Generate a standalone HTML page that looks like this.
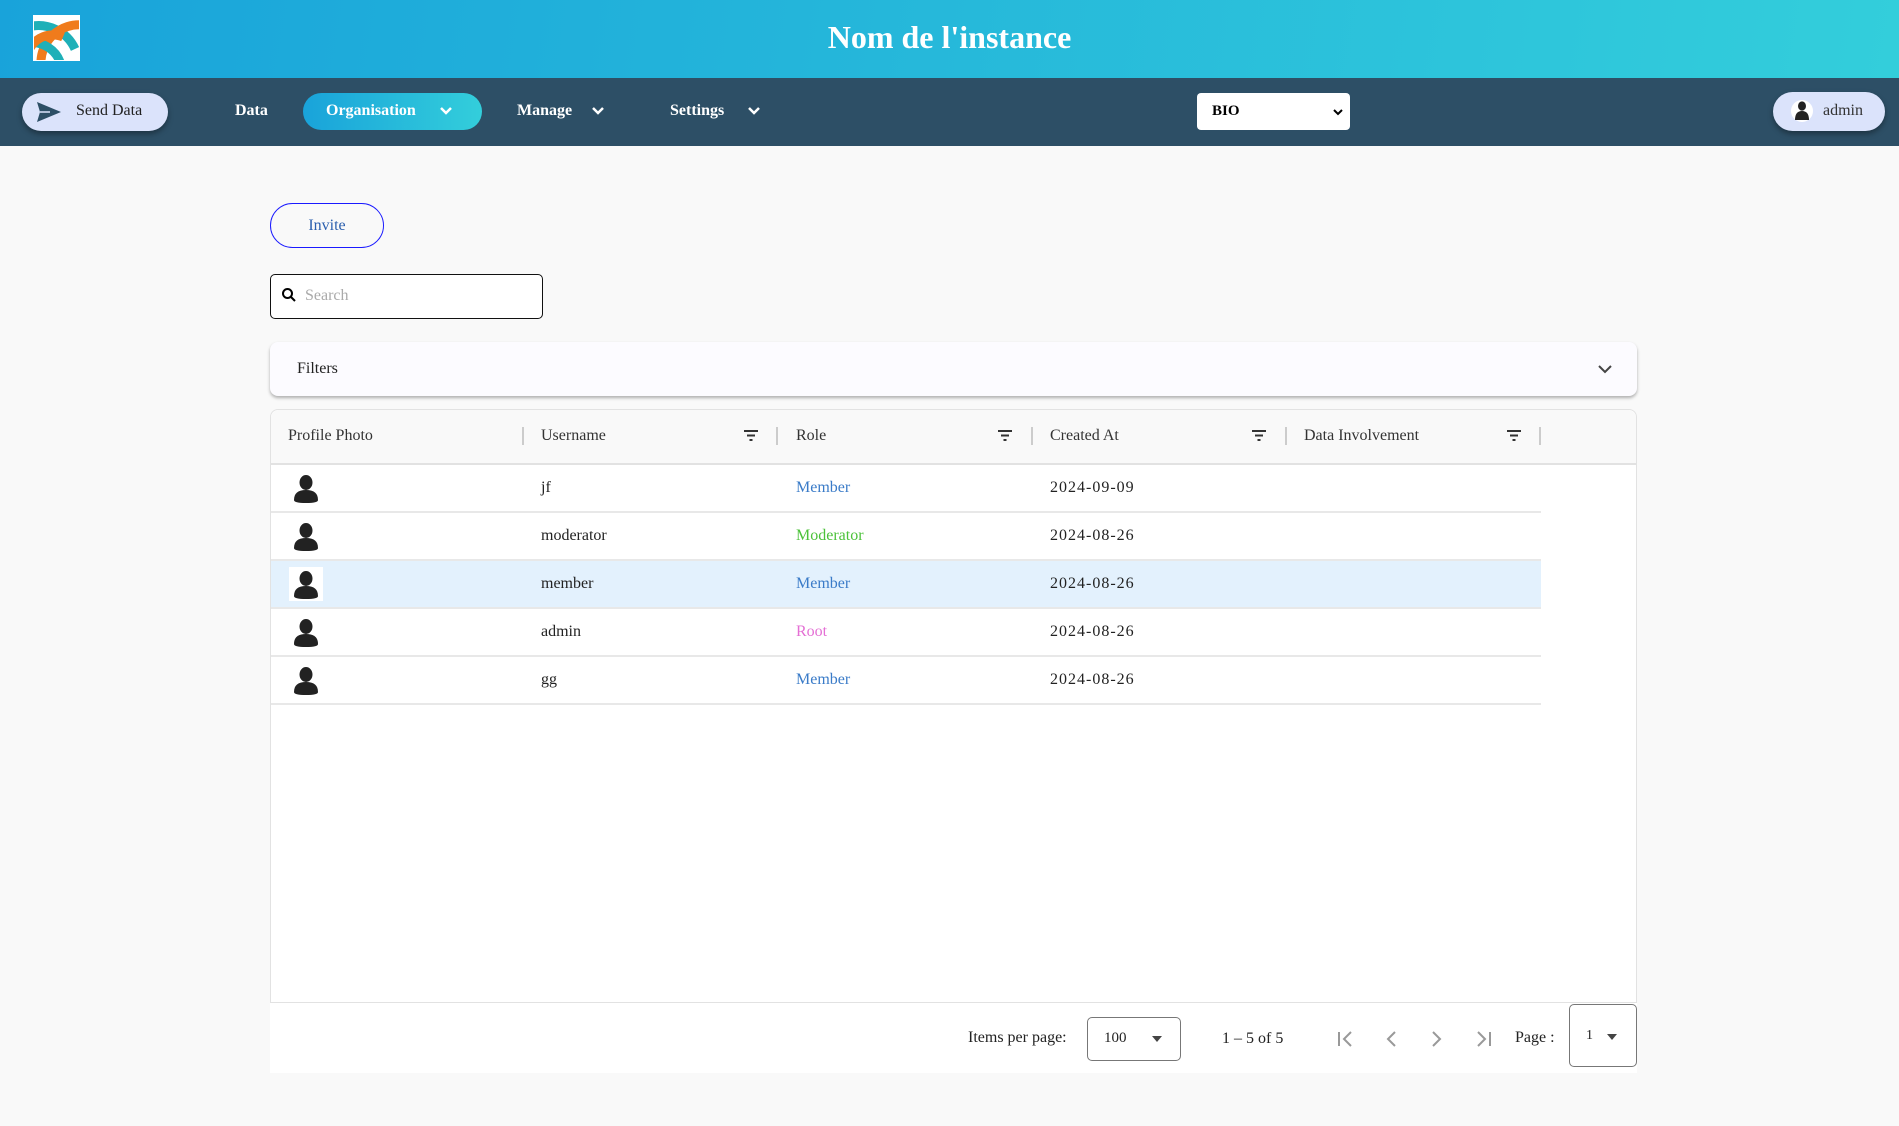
<!DOCTYPE html>
<html><head><meta charset="utf-8"><style>
*{box-sizing:border-box;margin:0;padding:0}
body{width:1899px;height:1126px;overflow:hidden;background:#f9f9f9;font-family:"Liberation Serif","DejaVu Serif",serif;color:#222;position:relative;font-size:16px}
.abs{position:absolute}
.hdr{left:0;top:0;width:1899px;height:78px;background:linear-gradient(100deg,#19a3da,#33cedb)}
.title{left:0;width:1899px;top:19px;text-align:center;color:#fff;font-size:32px;font-weight:bold}
.nav{left:0;top:78px;width:1899px;height:68px;background:#2d4f66}
.navt{color:#fff;font-weight:bold;font-size:16px;top:102px}
.pill{border-radius:20px;box-shadow:0 3px 6px rgba(0,0,0,.35)}
.th{top:427px;font-size:16px;color:#333}
.sep{top:427px;width:2px;height:18px;background:#ccc}
.row{left:271px;width:1270px;height:48px;border-bottom:2px solid #e8e8e8}
.cell{font-size:16px}
</style></head><body>
<div class="abs hdr"></div>
<svg class="abs" style="left:33px;top:15px" width="47" height="46" viewBox="0 0 47 46">
<rect width="47" height="46" fill="#fff"/>
<clipPath id="c"><rect x="1" y="1" width="45" height="44"/></clipPath>
<g clip-path="url(#c)" fill="none" stroke-width="9">
<path d="M-5 18 A40 40 0 0 1 42 40" stroke="#1fb0b8" transform="translate(0,-6)"/>
<path d="M8 50 A38 38 0 0 1 50 10" stroke="#f07b1c"/>
<path d="M-6 28 A30 30 0 0 1 28 50" stroke="#1fb0b8"/>
<path d="M-4 50 A26 26 0 0 1 32 22" stroke="#f07b1c" transform="translate(-2,0)"/>
</g></svg>
<div class="abs title">Nom de l'instance</div>
<div class="abs nav"></div>
<div class="abs pill" style="left:22px;top:93px;width:146px;height:38px;background:#dbe3fb"></div>
<svg class="abs" style="left:36px;top:101px" width="26" height="22" viewBox="0 0 26 22"><path d="M1 1 L25 11 L1 21 L4 11 Z" fill="#2d4f66"/><path d="M4 11 H14" stroke="#dbe3fb" stroke-width="1.5"/></svg>
<div class="abs" style="left:76px;top:102px;font-size:16px;color:#222">Send Data</div>
<div class="abs navt" style="left:235px">Data</div>
<div class="abs" style="left:303px;top:93px;width:179px;height:37px;border-radius:19px;background:linear-gradient(90deg,#19a3da,#33cedb)"></div>
<div class="abs navt" style="left:326px">Organisation</div>
<svg class="abs" style="left:439px;top:106px" width="14" height="10"><path d="M2 2 L7 7 L12 2" stroke="#fff" stroke-width="2.5" fill="none"/></svg>
<div class="abs navt" style="left:517px">Manage</div>
<svg class="abs" style="left:591px;top:106px" width="14" height="10"><path d="M2 2 L7 7 L12 2" stroke="#fff" stroke-width="2.5" fill="none"/></svg>
<div class="abs navt" style="left:670px">Settings</div>
<svg class="abs" style="left:747px;top:106px" width="14" height="10"><path d="M2 2 L7 7 L12 2" stroke="#fff" stroke-width="2.5" fill="none"/></svg>
<div class="abs" style="left:1197px;top:93px;width:153px;height:37px;background:#fff;border-radius:4px"></div>
<div class="abs" style="left:1212px;top:103px;font-size:15px;font-weight:bold;color:#000">BIO</div>
<svg class="abs" style="left:1333px;top:108px" width="10" height="8"><path d="M1 2 L5 6 L9 2" stroke="#000" stroke-width="2" fill="none"/></svg>
<div class="abs pill" style="left:1773px;top:92px;width:112px;height:39px;background:#dbe3fb"></div>
<div class="abs" style="left:1791px;top:100px;width:22px;height:22px;border-radius:50%;background:#fff"></div>
<svg class="abs" style="left:1795px;top:101px" width="14" height="20" viewBox="0 0 14 20"><ellipse cx="7" cy="5" rx="4" ry="4.6" fill="#222"/><path d="M0 19 Q0 10 7 10 Q14 10 14 19 Z" fill="#222"/></svg>
<div class="abs" style="left:1823px;top:102px;font-size:16px;color:#333">admin</div>

<div class="abs" style="left:270px;top:203px;width:114px;height:45px;border:1.5px solid #1a1aff;border-radius:23px;text-align:center;line-height:44px;color:#2b5fae">Invite</div>
<div class="abs" style="left:270px;top:274px;width:273px;height:45px;border:1.5px solid #111;border-radius:5px;background:#fff"></div>
<svg class="abs" style="left:281px;top:287px" width="16" height="16"><circle cx="6.5" cy="6.5" r="4.5" stroke="#000" stroke-width="2" fill="none"/><path d="M10 10 L14 14" stroke="#000" stroke-width="2"/></svg>
<div class="abs" style="left:305px;top:287px;color:#aaa">Search</div>
<div class="abs" style="left:270px;top:342px;width:1367px;height:54px;background:#fcfbff;border-radius:8px;box-shadow:0 2px 3px rgba(0,0,0,.3)"></div>
<div class="abs" style="left:297px;top:360px">Filters</div>
<svg class="abs" style="left:1597px;top:363px" width="16" height="12"><path d="M2 3 L8 9 L14 3" stroke="#444" stroke-width="2" fill="none"/></svg>

<div class="abs" style="left:270px;top:409px;width:1367px;height:594px;background:#fff;border:1.5px solid #e2e2e2;border-radius:8px 8px 0 0"></div>
<div class="abs" style="left:271px;top:410px;width:1365px;height:55px;background:#f9f9f9;border-bottom:2px solid #e2e2e2;border-radius:8px 8px 0 0"></div>
<div class="abs th" style="left:288px">Profile Photo</div>
<div class="abs sep" style="left:522px"></div>
<div class="abs th" style="left:541px">Username</div>
<div class="abs sep" style="left:776px"></div>
<div class="abs th" style="left:796px">Role</div>
<div class="abs sep" style="left:1031px"></div>
<div class="abs th" style="left:1050px">Created At</div>
<div class="abs sep" style="left:1285px"></div>
<div class="abs th" style="left:1304px">Data Involvement</div>
<div class="abs sep" style="left:1539px"></div>
<svg class="abs" style="left:743px;top:429px" width="16" height="13"><path d="M1 2H15M4 6.5H12M6.5 11H9.5" stroke="#333" stroke-width="2"/></svg>
<svg class="abs" style="left:997px;top:429px" width="16" height="13"><path d="M1 2H15M4 6.5H12M6.5 11H9.5" stroke="#333" stroke-width="2"/></svg>
<svg class="abs" style="left:1251px;top:429px" width="16" height="13"><path d="M1 2H15M4 6.5H12M6.5 11H9.5" stroke="#333" stroke-width="2"/></svg>
<svg class="abs" style="left:1506px;top:429px" width="16" height="13"><path d="M1 2H15M4 6.5H12M6.5 11H9.5" stroke="#333" stroke-width="2"/></svg>

<div class="abs row" style="top:465px"></div>
<div class="abs row" style="top:513px"></div>
<div class="abs row" style="top:561px;background:#e3f1fd"></div>
<div class="abs row" style="top:609px"></div>
<div class="abs row" style="top:657px"></div>
<div class="abs" style="left:289px;top:567px;width:34px;height:34px;background:#fff"></div>

<svg class="abs" style="left:294px;top:475px" width="24" height="29" viewBox="0 0 24 29"><ellipse cx="12" cy="7.5" rx="6.5" ry="7.5" fill="#222"/><path d="M0 25 Q0 15 12 15 Q24 15 24 25 Q24 28 12 28 Q0 28 0 25Z" fill="#222"/></svg>
<svg class="abs" style="left:294px;top:523px" width="24" height="29" viewBox="0 0 24 29"><ellipse cx="12" cy="7.5" rx="6.5" ry="7.5" fill="#222"/><path d="M0 25 Q0 15 12 15 Q24 15 24 25 Q24 28 12 28 Q0 28 0 25Z" fill="#222"/></svg>
<svg class="abs" style="left:294px;top:571px" width="24" height="29" viewBox="0 0 24 29"><ellipse cx="12" cy="7.5" rx="6.5" ry="7.5" fill="#222"/><path d="M0 25 Q0 15 12 15 Q24 15 24 25 Q24 28 12 28 Q0 28 0 25Z" fill="#222"/></svg>
<svg class="abs" style="left:294px;top:619px" width="24" height="29" viewBox="0 0 24 29"><ellipse cx="12" cy="7.5" rx="6.5" ry="7.5" fill="#222"/><path d="M0 25 Q0 15 12 15 Q24 15 24 25 Q24 28 12 28 Q0 28 0 25Z" fill="#222"/></svg>
<svg class="abs" style="left:294px;top:667px" width="24" height="29" viewBox="0 0 24 29"><ellipse cx="12" cy="7.5" rx="6.5" ry="7.5" fill="#222"/><path d="M0 25 Q0 15 12 15 Q24 15 24 25 Q24 28 12 28 Q0 28 0 25Z" fill="#222"/></svg>

<div class="abs cell" style="left:541px;top:479px">jf</div>
<div class="abs cell" style="left:796px;top:479px;color:#3a7bc8">Member</div>
<div class="abs cell" style="left:1050px;top:479px;letter-spacing:1px">2024-09-09</div>
<div class="abs cell" style="left:541px;top:527px">moderator</div>
<div class="abs cell" style="left:796px;top:527px;color:#4cc23a">Moderator</div>
<div class="abs cell" style="left:1050px;top:527px;letter-spacing:1px">2024-08-26</div>
<div class="abs cell" style="left:541px;top:575px">member</div>
<div class="abs cell" style="left:796px;top:575px;color:#3a7bc8">Member</div>
<div class="abs cell" style="left:1050px;top:575px;letter-spacing:1px">2024-08-26</div>
<div class="abs cell" style="left:541px;top:623px">admin</div>
<div class="abs cell" style="left:796px;top:623px;color:#e46fd4">Root</div>
<div class="abs cell" style="left:1050px;top:623px;letter-spacing:1px">2024-08-26</div>
<div class="abs cell" style="left:541px;top:671px">gg</div>
<div class="abs cell" style="left:796px;top:671px;color:#3a7bc8">Member</div>
<div class="abs cell" style="left:1050px;top:671px;letter-spacing:1px">2024-08-26</div>

<div class="abs" style="left:270px;top:1003px;width:1367px;height:70px;background:#fff"></div>
<div class="abs" style="left:968px;top:1029px">Items per page:</div>
<div class="abs" style="left:1087px;top:1017px;width:94px;height:44px;border:1.5px solid #777;border-radius:5px"></div>
<div class="abs" style="left:1104px;top:1030px;font-size:15px">100</div>
<svg class="abs" style="left:1151px;top:1035px" width="12" height="8"><path d="M1 1H11L6 7Z" fill="#444"/></svg>
<div class="abs" style="left:1222px;top:1030px">1 – 5 of 5</div>
<svg class="abs" style="left:1337px;top:1029px" width="160" height="20" fill="none" stroke="#999" stroke-width="2">
<path d="M2 3V17M14 3L7 10L14 17"/><path d="M58 3L51 10L58 17"/><path d="M96 3L103 10L96 17"/><path d="M141 3L148 10L141 17M153 3V17"/></svg>
<div class="abs" style="left:1515px;top:1029px">Page :</div>
<div class="abs" style="left:1569px;top:1004px;width:68px;height:63px;border:1.5px solid #777;border-radius:5px"></div>
<div class="abs" style="left:1586px;top:1028px;font-size:14px">1</div>
<svg class="abs" style="left:1606px;top:1033px" width="12" height="8"><path d="M1 1H11L6 7Z" fill="#444"/></svg>
</body></html>
